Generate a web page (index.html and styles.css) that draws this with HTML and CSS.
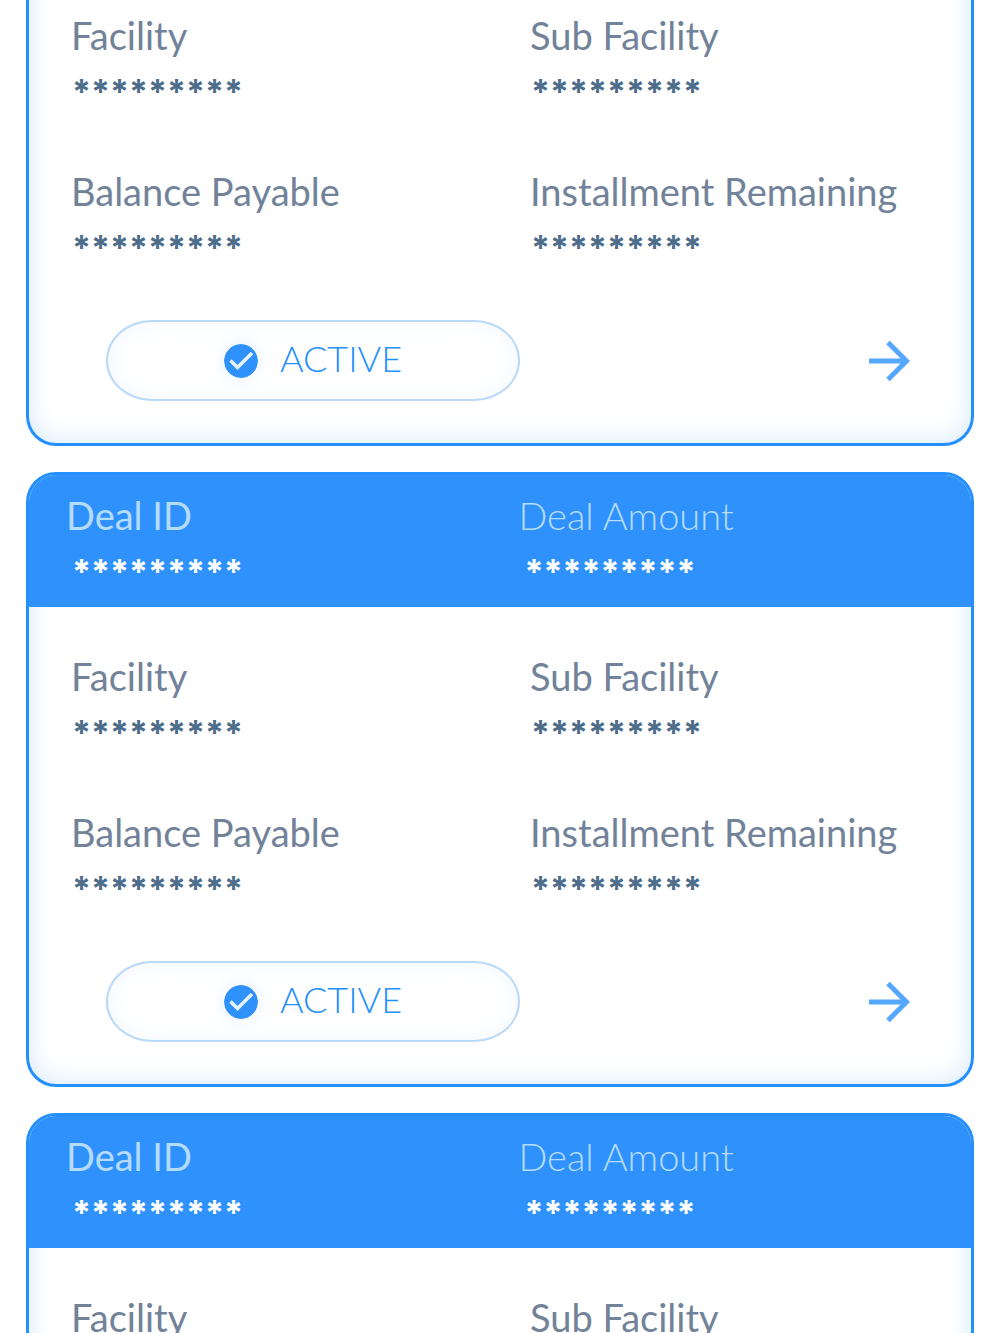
FILE: index.html
```
<!DOCTYPE html>
<html lang="en">
<head>
    <meta charset="utf-8">
    <title>Deals</title>
    <meta name="viewport" content="width=device-width, initial-scale=1">
    <link rel="stylesheet" href="styles.css">
</head>
<body>
    <main class="deals">
        <!-- first card, header is scrolled out of view -->
        <article class="card card-scrolled">
            <dl class="card-body">
                <div class="field">
                    <dt>Facility</dt>
                    <dd>*********</dd>
                </div>
                <div class="field">
                    <dt>Sub Facility</dt>
                    <dd>*********</dd>
                </div>
                <div class="field">
                    <dt>Balance Payable</dt>
                    <dd>*********</dd>
                </div>
                <div class="field">
                    <dt>Installment Remaining</dt>
                    <dd>*********</dd>
                </div>
            </dl>
            <div class="card-footer">
                <button type="button" class="status">
                    <svg class="check" viewBox="0 0 34 34" aria-hidden="true">
                        <circle cx="17" cy="17" r="17"/>
                        <path d="M6.500 16.500L13.500 23.500L28 9"/>
                    </svg>
                    <span>ACTIVE</span>
                </button>
                <a class="open" href="#" aria-label="Open deal">
                    <svg class="arrow" viewBox="0 0 42 42" aria-hidden="true">
                        <path d="M1 21H37M20 2.500L38.500 21L20 39.500"/>
                    </svg>
                </a>
            </div>
        </article>

        <article class="card">
            <dl class="card-header">
                <div class="field">
                    <dt>Deal ID</dt>
                    <dd>*********</dd>
                </div>
                <div class="field">
                    <dt class="light">Deal Amount</dt>
                    <dd>*********</dd>
                </div>
            </dl>
            <dl class="card-body">
                <div class="field">
                    <dt>Facility</dt>
                    <dd>*********</dd>
                </div>
                <div class="field">
                    <dt>Sub Facility</dt>
                    <dd>*********</dd>
                </div>
                <div class="field">
                    <dt>Balance Payable</dt>
                    <dd>*********</dd>
                </div>
                <div class="field">
                    <dt>Installment Remaining</dt>
                    <dd>*********</dd>
                </div>
            </dl>
            <div class="card-footer">
                <button type="button" class="status">
                    <svg class="check" viewBox="0 0 34 34" aria-hidden="true">
                        <circle cx="17" cy="17" r="17"/>
                        <path d="M6.500 16.500L13.500 23.500L28 9"/>
                    </svg>
                    <span>ACTIVE</span>
                </button>
                <a class="open" href="#" aria-label="Open deal">
                    <svg class="arrow" viewBox="0 0 42 42" aria-hidden="true">
                        <path d="M1 21H37M20 2.500L38.500 21L20 39.500"/>
                    </svg>
                </a>
            </div>
        </article>

        <article class="card">
            <dl class="card-header">
                <div class="field">
                    <dt>Deal ID</dt>
                    <dd>*********</dd>
                </div>
                <div class="field">
                    <dt class="light">Deal Amount</dt>
                    <dd>*********</dd>
                </div>
            </dl>
            <dl class="card-body">
                <div class="field">
                    <dt>Facility</dt>
                    <dd>*********</dd>
                </div>
                <div class="field">
                    <dt>Sub Facility</dt>
                    <dd>*********</dd>
                </div>
            </dl>
        </article>
    </main>
</body>
</html>
```
FILE: styles.css
```
* {
    box-sizing: border-box;
}
body {
    margin: 0;
    height: 100vh;
    overflow: hidden;
    background-color: #fff;
    font-family: Lato, sans-serif;
    font-size: 38px;
    line-height: 48px;
}
.deals {
    display: flex;
    flex-direction: column;
    gap: 26px;
    padding: 0 26px;
}
.card {
    flex-shrink: 0;
    border: 3px solid #2490ff;
    border-radius: 30px;
    overflow: hidden;
    background-color: #fff;
    box-shadow: inset 0 0 26px #d3e8fb;
}
.card-scrolled {
    margin-top: -40px;
    border-top: none;
    border-radius: 0 0 30px 30px;
}
dl, dd {
    margin: 0;
}
.card-header {
    display: grid;
    grid-template-columns: 50% 1fr;
    padding: 16px 0 11px 37px;
    background-color: #2f92fc;
    color: #b5dbff;
}
.card-header dd {
    padding-left: 6px;
    color: #fff;
}
.card-body {
    display: grid;
    grid-template-columns: 51% 1fr;
    row-gap: 51px;
    padding: 45px 0 0 42px;
    color: #718299;
}
.card-scrolled .card-body {
    padding-top: 51px;
}
.light {
    font-weight: 300;
}
dd {
    padding: 9px 0 0 1px;
    color: #4d6d8b;
    font-family: Inter, sans-serif;
    font-size: 34px;
    font-weight: bold;
}
.card-footer {
    display: flex;
    align-items: center;
    justify-content: space-between;
    padding: 48px 61px 42px 77px;
}
.status {
    display: flex;
    align-items: center;
    justify-content: center;
    gap: 22px;
    width: 414px;
    height: 81px;
    padding: 0;
    border: 2px solid #bad9f8;
    border-radius: 46px / 40px;
    background-color: #fff;
    box-shadow: inset 0 0 26px #f3f8fe;
    color: #2490ff;
    font-family: inherit;
    font-size: 36px;
    font-weight: 300;
    cursor: pointer;
}
.status span {
    padding-bottom: 5px;
}
.check {
    width: 34px;
    height: 34px;
    border-radius: 50%;
    box-shadow: 0 0 18px #e3effc;
    fill: #2f92fc;
}
.check path {
    fill: none;
    stroke: #e6f3ff;
    stroke-width: 3.5;
}
.open {
    display: flex;
}
.arrow {
    width: 42px;
    height: 42px;
    fill: none;
    stroke: #55a7ff;
    stroke-width: 5;
}
```
